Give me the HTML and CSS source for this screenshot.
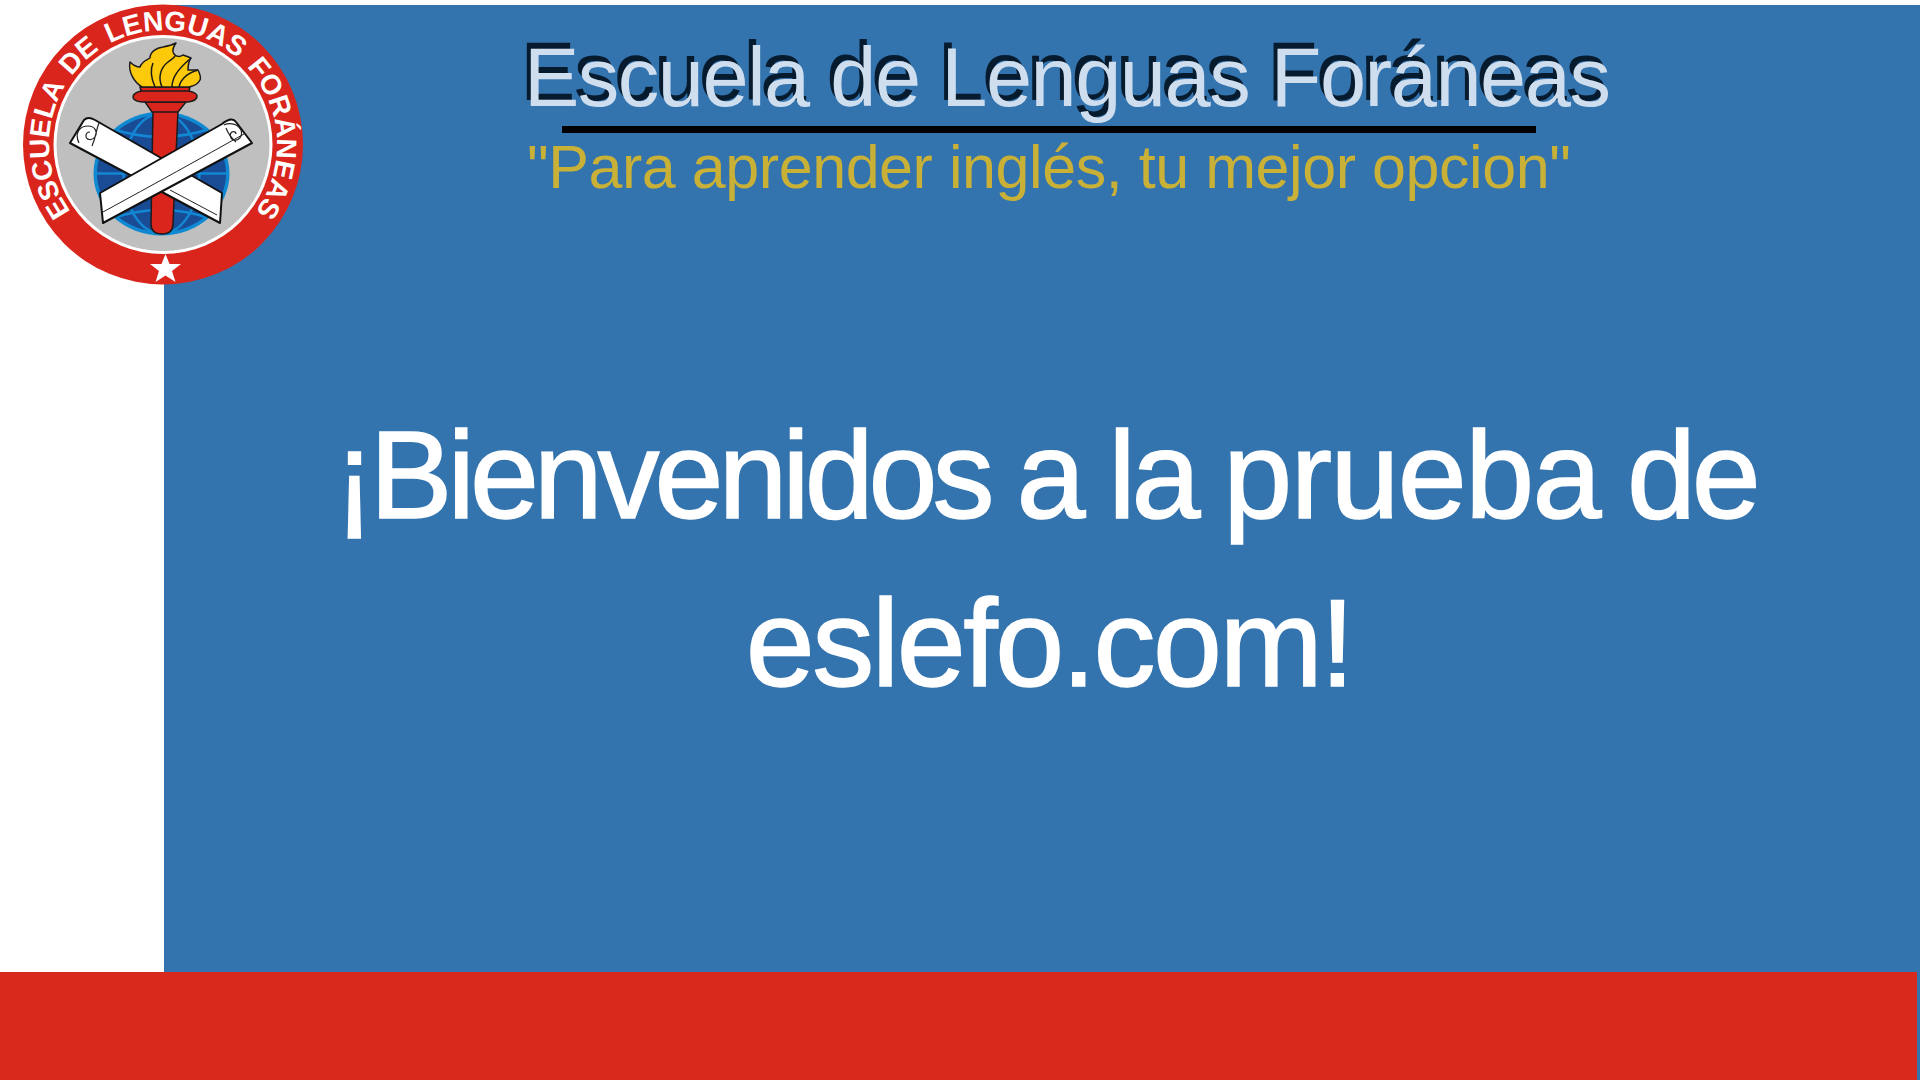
FILE: index.html
```html
<!DOCTYPE html>
<html lang="es">
<head>
<meta charset="utf-8">
<title>Escuela de Lenguas Foráneas</title>
<link rel="stylesheet" href="styles.css">
</head>
<body>
<div class="page">
  <div class="top-strip"></div>
  <div class="middle">
    <div class="side"></div>
    <main class="panel">
      <header class="masthead">
        <h1 class="title">Escuela de Lenguas Foráneas</h1>
        <div class="rule"></div>
        <p class="motto">"Para aprender inglés, tu mejor opcion"</p>
      </header>
      <h2 class="welcome"><span class="tight">¡Bienvenidos</span> a la <span class="loose">prueba</span> de<br><span class="site">eslefo.com!</span></h2>
    </main>
  </div>
  <footer class="footer"><div class="footer-red"></div></footer>
  <svg class="logo" viewBox="0 0 320 300" width="320" height="300" aria-label="Escudo">
    <defs>
      <path id="ring" d="M163 258.500A114 114 0 1 1 163 30.500A114 114 0 1 1 163 258.500"/>
      <clipPath id="globe-clip"><ellipse cx="161.500" cy="173.500" rx="65" ry="59"/></clipPath>
    </defs>
    <circle cx="163" cy="144.500" r="140" fill="#da251c"/>
    <circle cx="163" cy="144.500" r="109.500" fill="#fff"/>
    <circle cx="163" cy="144.500" r="106.500" fill="#bfbfbf"/>
    <text class="ring-text"><textPath href="#ring" startOffset="50%" text-anchor="middle">ESCUELA DE LENGUAS FORÁNEAS</textPath></text>
    <polygon points="165.500,254 169.500,264 181,264 172,271 175.500,282 165.500,275.500 155.500,282 159,271 150,264 161.500,264" fill="#fff"/>
    <ellipse cx="161.500" cy="173.500" rx="68" ry="62" fill="#0f8ad2"/>
    <ellipse cx="161.500" cy="173.500" rx="64.500" ry="58.500" fill="#1a4b95"/>
    <g clip-path="url(#globe-clip)" fill="none" stroke="#1288d4" stroke-width="2.500">
      <ellipse cx="161.500" cy="173.500" rx="38" ry="60"/>
      <path d="M96 173.500H228M100 145Q161 165 223 145M100 202Q161 182 223 202M110 128Q161 146 212 128M110 219Q161 201 212 219"/>
    </g>
    <path d="M153 110H178L173 224Q173 234 162 234Q151 234 151 224Z" fill="#da251c" stroke="#1b1b1b" stroke-width="1.500"/>
    <path d="M145 102H186L178 112H152Z" fill="#da251c" stroke="#1b1b1b" stroke-width="1.500"/>
    <path d="M140 87H190L189 91Q198 93 197 97Q196 101 188 102H142Q133 101 133 97Q133 93 141 91Z" fill="#da251c" stroke="#1b1b1b" stroke-width="1.500"/>
    <path d="M141 91H189" fill="none" stroke="#1b1b1b" stroke-width="1.500"/>
    <path d="M142 87C134 82 128 72 130 62C134 66 137 67 140 67C142 61 147 60 150 58C150 52 156 48 163 47C168 46 172 45 176 43C173 47 172 51 174 54C176 57 180 57 183 55C186 56 189 57 191 58C188 62 188 67 188 70C192 70 195 70 198 70C200 74 201 78 200 80C198 84 194 86 189 87Z" fill="#fdc90b" stroke="#1b1b1b" stroke-width="1.500" stroke-linejoin="round"/>
    <path d="M155 87C151 78 150 70 153 63M162 87C158 78 160 68 168 62C172 59 174 58 175 56M172 87C172 78 177 70 191 58M179 87C181 78 188 73 198 70" fill="none" stroke="#1b1b1b" stroke-width="1.500"/>
    <path d="M70 143L84 120Q88 116 95 120L222 193L220 223Z" fill="#fff" stroke="#111" stroke-width="2" stroke-linejoin="round"/>
    <path d="M170 190L217 215" fill="none" stroke="#222" stroke-width="1"/>
    <path d="M100 193L222 124Q232 116 236 122L252 143L103 223Z" fill="#fff" stroke="#111" stroke-width="2" stroke-linejoin="round"/>
    <path d="M79 143C74 133 80 126 88 126C95 126 98 132 95 137C92 141 86 140 86 136C86 133 88 132 90 132M99 123C96 130 96 137 92 146" fill="none" stroke="#222" stroke-width="1.200"/>
    <path d="M103 212Q180 170 244 134" fill="none" stroke="#222" stroke-width="1"/>
    <path d="M224 125C230 122 238 124 241 130C243 136 239 141 234 140C230 139 229 134 232 132C234 131 236 132 236 134M226 128Q229 136 236 142" fill="none" stroke="#222" stroke-width="1.200"/>
  </svg>
</div>
</body>
</html>
```
FILE: styles.css
```css
* { box-sizing: border-box; }
html, body { margin: 0; padding: 0; }
body { background: #fff; font-family: "Liberation Sans", Arial, sans-serif; }
.page { position: relative; width: 1920px; height: 1080px; overflow: hidden; display: flex; flex-direction: column; }
.top-strip { height: 5px; background: #fff; }
.middle { flex: 1; display: flex; min-height: 0; }
.side { width: 164px; background: #fff; }
.panel { flex: 1; background: #3373ae; display: flex; flex-direction: column; }
.masthead { display: flex; flex-direction: column; align-items: flex-start; padding-top: 27px; }
.title { margin: 0 0 0 360px; font-size: 83px; line-height: 92px; font-weight: 400; letter-spacing: -1.500px; color: #cfdeee; text-shadow: -4px -6px 0 #071b2e; white-space: nowrap; }
.rule { width: 974px; height: 7px; margin: 2px 0 0 398px; background: #000; }
.motto { margin: -1px 0 0 363px; font-size: 61px; line-height: 70px; letter-spacing: -0.440px; color: #c9b037; white-space: nowrap; }
.welcome { margin: 189px 0 0; padding-left: 6px; font-size: 124px; line-height: 168px; font-weight: 400; color: #fff; text-align: center; letter-spacing: -4.300px; word-spacing: -3px; -webkit-text-stroke: 1.500px #fff; }
.tight { letter-spacing: -5.100px; }
.loose { letter-spacing: -1.600px; }
.site { margin-left: 8px; letter-spacing: -2.500px; }
.footer { height: 108px; background: #3373ae; }
.footer-red { height: 100%; margin-right: 3px; background: #d9291c; }
.logo { position: absolute; left: 0; top: 0; }
.ring-text { font-family: "Liberation Sans", Arial, sans-serif; font-weight: 700; font-size: 28px; letter-spacing: 0; word-spacing: 4px; fill: #fff; }
```
